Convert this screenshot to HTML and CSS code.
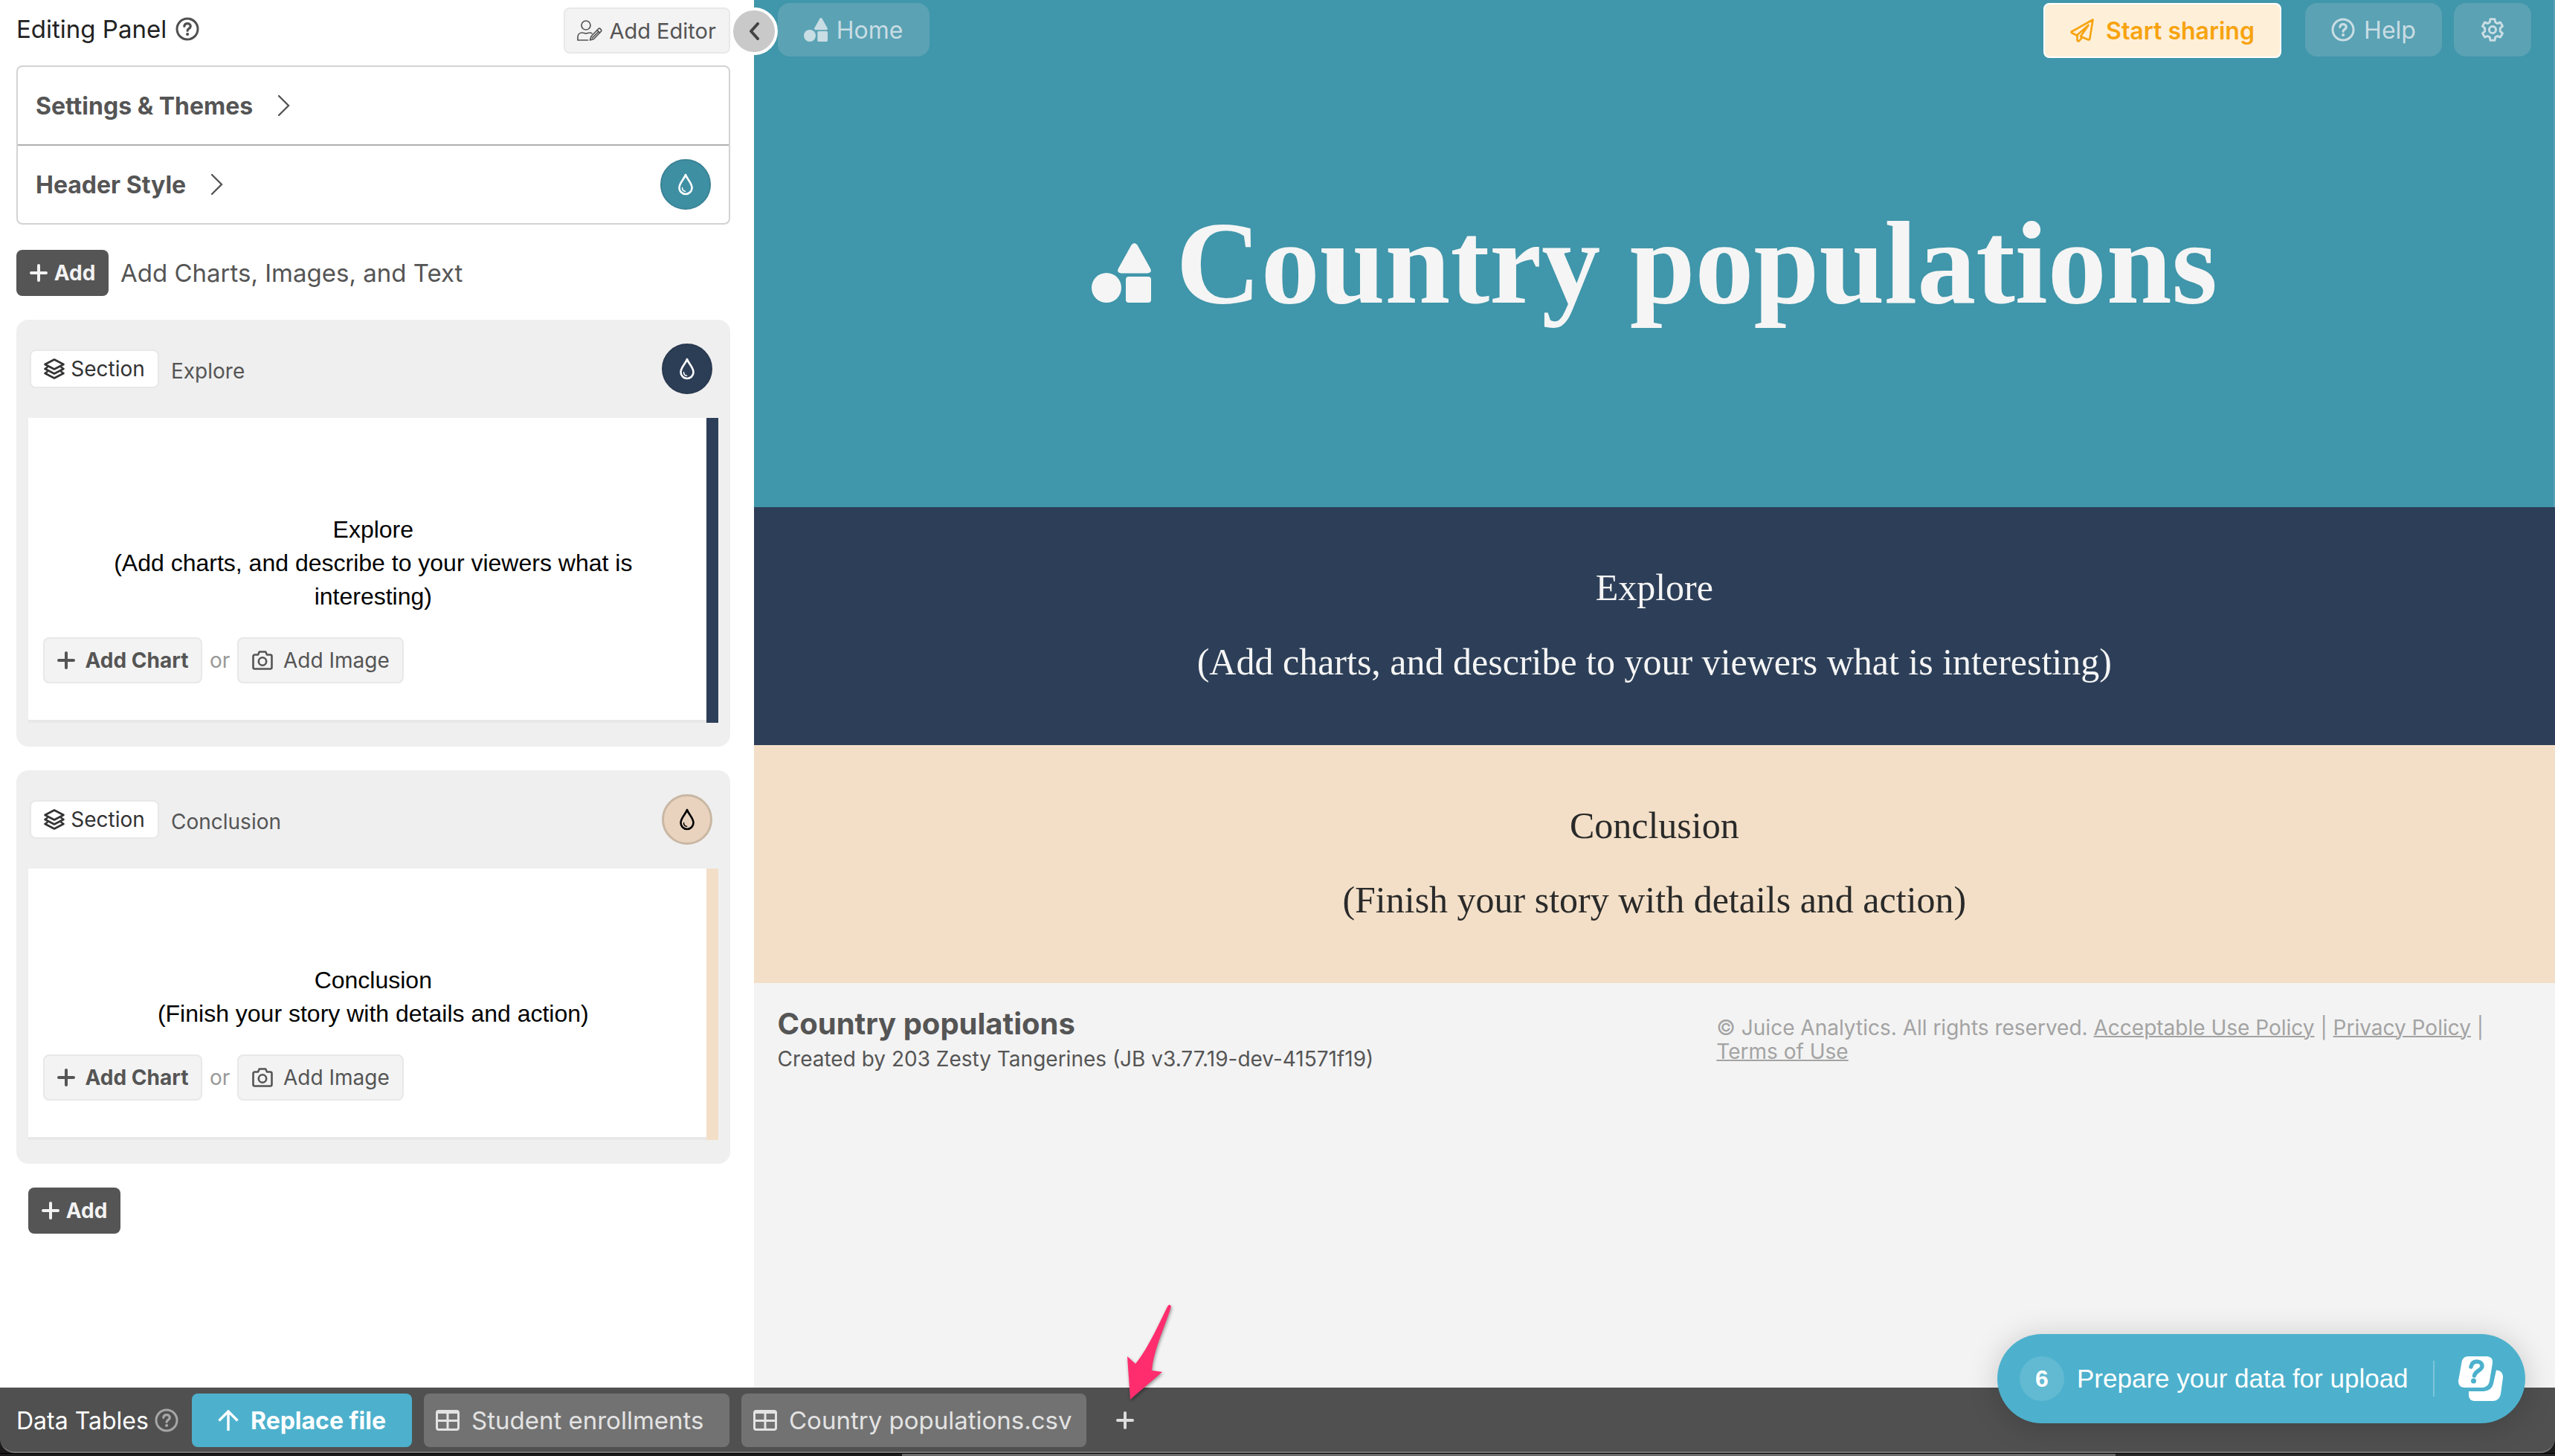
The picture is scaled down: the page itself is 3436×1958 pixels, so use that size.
FILE: index.html
```html
<!DOCTYPE html>
<html lang="en">
<head>
<meta charset="utf-8">
<title>Country populations</title>
<link rel="stylesheet" href="styles.css">
</head>
<body>
<svg class="sprite" aria-hidden="true">
  <symbol id="i-help" viewBox="0 0 32 32"><g fill="none" stroke="currentColor" stroke-linecap="round"><circle cx="16" cy="16" r="14" stroke-width="3"/><path d="M11.8 12.4c.3-2.600 2-3.700 4.300-3.700 2.500 0 4.200 1.500 4.200 3.600 0 3.100-4.200 3-4.200 6" stroke-width="3.200"/></g><circle cx="16.100" cy="23" r="2.100" fill="currentColor"/></symbol>
  <symbol id="i-plus" viewBox="0 0 24 24"><path d="M12 2v20M2 12h20" fill="none" stroke="currentColor" stroke-width="4" stroke-linecap="round"/></symbol>
  <symbol id="i-chevron" viewBox="0 0 16 28"><path d="M1 1l13 13L1 27" fill="none" stroke="currentColor" stroke-width="2.400" stroke-linecap="round"/></symbol>
  <symbol id="i-drop" viewBox="0 0 22 30"><path d="M11 2C9 8 2.500 13 2.500 19.500a8.500 8.500 0 0 0 17 0C19.500 13 13 8 11 2z" fill="none" stroke="currentColor" stroke-width="2.600" stroke-linejoin="round"/><path d="M6.500 19.500c0 2.800 1.700 4.500 4 4.800" fill="none" stroke="currentColor" stroke-width="1.500" stroke-linecap="round"/></symbol>
  <symbol id="i-layers" viewBox="0 0 28 28"><g fill="none" stroke="currentColor" stroke-width="2.600" stroke-linejoin="round" stroke-linecap="round"><path d="M14 1.500L26.500 8 14 14.500 1.500 8z"/><path d="M4.500 12L1.500 14 14 20.500 26.500 14l-3-2"/><path d="M4.500 18l-3 2L14 26.500 26.500 20l-3-2"/></g></symbol>
  <symbol id="i-camera" viewBox="0 0 28 26"><g fill="none" stroke="currentColor" stroke-width="2.600" stroke-linejoin="round"><path d="M3.500 5.500h4.500l1.800-4h8.400l1.800 4h4.500a2 2 0 0 1 2 2v15a2 2 0 0 1-2 2h-21a2 2 0 0 1-2-2v-15a2 2 0 0 1 2-2z"/><circle cx="14" cy="14.500" r="5.200"/></g></symbol>
  <symbol id="i-table" viewBox="0 0 32 28"><path fill-rule="evenodd" d="M4 0h24a4 4 0 0 1 4 4v20a4 4 0 0 1-4 4H4a4 4 0 0 1-4-4V4a4 4 0 0 1 4-4zM3 5v8h11.500V5zM17.500 5v8H29V5zM3 16v8a1 1 0 0 0 1 1h10.500v-9zM17.500 16v9H28a1 1 0 0 0 1-1v-8z" fill="currentColor"/></symbol>
  <symbol id="i-shapes" viewBox="0 0 80 80"><g fill="currentColor"><circle cx="20" cy="60" r="20"/><path d="M53.500 2.500q4-5 8 0L79 34q3 6-4 6.500H40q-7-.5-4-6.500z"/><rect x="46" y="45" width="34" height="35" rx="4"/></g></symbol>
  <symbol id="i-editor" viewBox="0 0 34 28"><g fill="none" stroke="currentColor" stroke-width="1.700" stroke-linejoin="round" stroke-linecap="round"><circle cx="12" cy="7" r="6"/><path d="M14.500 27H1v-4c0-3 2-6 6-6 2 0 3 1 5 1s3-1 5-1c1.500 0 2.400.3 3 .8"/><path d="M17.500 27l1.500-5 10-10.500c1.500-1 4.500 1.500 3.500 3.500L22.500 25.500z"/><path d="M27 13.700l3.500 3.500M20.500 24l7.500-7.500"/></g></symbol>
  <symbol id="i-plane" viewBox="0 0 32 32"><g fill="none" stroke="currentColor" stroke-width="2.600" stroke-linejoin="round" stroke-linecap="round"><path d="M30.500 1.500L2 17.500q-1 1 .5 2l6.500 3L24.500 9 14 24l10.500 4.500q1.500.3 1.800-1z"/><path d="M9.500 22.500V29q1 2.500 3 .5L16 25.500"/></g></symbol>
  <symbol id="i-gear" viewBox="0 0 32 32"><g fill="none" stroke="currentColor" stroke-width="3" stroke-linejoin="round"><path d="M13 1.800h6l.8 4.200 2.700 1.500 4-1.500 3 5.200-3.200 2.800v4l3.200 2.800-3 5.200-4-1.500-2.700 1.500-.8 4.200h-6l-.8-4.200-2.700-1.500-4 1.500-3-5.200L5.700 18v-4l-3.200-2.800 3-5.200 4 1.500L12.200 6z"/><circle cx="16" cy="16" r="4.600"/></g></symbol>
  <symbol id="i-up" viewBox="0 0 28 28"><path d="M14 28V2M1.500 14.500L14 2l12.500 12.500" fill="none" stroke="currentColor" stroke-width="3.400"/></symbol>
  <symbol id="i-back" viewBox="0 0 14 24"><path d="M12 2L3 12l9 10" fill="none" stroke="currentColor" stroke-width="4" stroke-linecap="round" stroke-linejoin="round"/></symbol>
</svg>

<div class="app">
  <div class="workspace">
    <aside class="panel">
      <div class="panel-head">
        <h2 class="panel-title">Editing Panel <svg class="ic-help"><use href="#i-help"/></svg></h2>
        <button class="btn btn-editor"><svg class="ic-editor"><use href="#i-editor"/></svg>Add Editor</button>
      </div>

      <div class="accordion">
        <div class="acc-row"><button class="acc-btn">Settings &amp; Themes <svg class="ic-chevron"><use href="#i-chevron"/></svg></button></div>
        <div class="acc-row"><button class="acc-btn">Header Style <svg class="ic-chevron"><use href="#i-chevron"/></svg></button>
          <button class="swatch teal" aria-label="Header colour"><svg class="ic-drop"><use href="#i-drop"/></svg></button></div>
      </div>

      <div class="add-row">
        <button class="btn-add"><svg class="ic-plus"><use href="#i-plus"/></svg>Add</button>
        <span>Add Charts, Images, and Text</span>
      </div>

      <section class="card navy-card">
        <div class="card-head">
          <button class="badge"><svg class="ic-layers"><use href="#i-layers"/></svg>Section</button>
          <span class="card-name">Explore</span>
          <button class="swatch navy" aria-label="Section colour"><svg class="ic-drop"><use href="#i-drop"/></svg></button>
        </div>
        <div class="card-body">
          <p class="card-text">Explore<br>(Add charts, and describe to your viewers what is interesting)</p>
          <div class="card-actions">
            <button class="btn btn-chart"><svg class="ic-plus"><use href="#i-plus"/></svg>Add Chart</button>
            <span class="or">or</span>
            <button class="btn btn-image"><svg class="ic-camera"><use href="#i-camera"/></svg>Add Image</button>
          </div>
        </div>
      </section>

      <section class="card sand-card">
        <div class="card-head">
          <button class="badge"><svg class="ic-layers"><use href="#i-layers"/></svg>Section</button>
          <span class="card-name">Conclusion</span>
          <button class="swatch sand" aria-label="Section colour"><svg class="ic-drop"><use href="#i-drop"/></svg></button>
        </div>
        <div class="card-body">
          <p class="card-text">Conclusion<br>(Finish your story with details and action)</p>
          <div class="card-actions">
            <button class="btn btn-chart"><svg class="ic-plus"><use href="#i-plus"/></svg>Add Chart</button>
            <span class="or">or</span>
            <button class="btn btn-image"><svg class="ic-camera"><use href="#i-camera"/></svg>Add Image</button>
          </div>
        </div>
      </section>

      <div class="add-last"><button class="btn-add"><svg class="ic-plus"><use href="#i-plus"/></svg>Add</button></div>
      <button class="collapse" aria-label="Collapse panel"><svg class="ic-back"><use href="#i-back"/></svg></button>
    </aside>

    <main class="story">
      <header class="hero">
        <nav class="topnav">
          <button class="nav-btn"><svg class="ic-nav"><use href="#i-shapes"/></svg>Home</button>
          <button class="share"><svg class="ic-nav"><use href="#i-plane"/></svg>Start sharing</button>
          <button class="nav-btn nav-help"><svg class="ic-nav"><use href="#i-help"/></svg>Help</button>
          <button class="nav-btn nav-gear" aria-label="Settings"><svg class="ic-nav"><use href="#i-gear"/></svg></button>
        </nav>
        <h1 class="title"><svg class="ic-logo"><use href="#i-shapes"/></svg>Country populations</h1>
      </header>
      <section class="band band-navy"><p>Explore</p><p>(Add charts, and describe to your viewers what is interesting)</p></section>
      <section class="band band-sand"><p>Conclusion</p><p>(Finish your story with details and action)</p></section>
      <footer class="foot">
        <div class="foot-left"><h3>Country populations</h3><p>Created by 203 Zesty Tangerines (JB v3.77.19-dev-41571f19)</p></div>
        <p class="legal">© Juice Analytics. All rights reserved. <a href="#">Acceptable Use Policy</a> | <a href="#">Privacy Policy</a> | <a href="#">Terms of Use</a></p>
      </footer>
    </main>
  </div>

  <div class="tables">
    <span class="tables-label">Data Tables<svg class="ic-help"><use href="#i-help"/></svg></span>
    <button class="tab tab-replace"><svg class="ic-up"><use href="#i-up"/></svg>Replace file</button>
    <button class="tab tab-student"><svg class="ic-table"><use href="#i-table"/></svg>Student enrollments</button>
    <button class="tab tab-country"><svg class="ic-table"><use href="#i-table"/></svg>Country populations.csv</button>
    <button class="tab-new" aria-label="Add table"><svg class="ic-plus"><use href="#i-plus"/></svg></button>
    <svg class="pointer" viewBox="0 0 60 136"><path d="M4 134L0 76l11 10C26 68 40 38 54 9q3-5 5 0C50 38 35 68 33 95l14 2z" transform="translate(1 -6)"/></svg>
  </div>
</div>
<div class="desktop"></div>

<button class="guide">
  <span class="guide-num">6</span>
  <span class="guide-text">Prepare your data for upload</span>
  <svg class="guide-icon" viewBox="0 0 60 60"><path d="M51 18.500q9.500 1 9 10l-3 22q-1.500 9-10 9.500H21q-7-1-7-8v-5h20q11-1 13-10z" fill="#fff"/><path d="M13 0h26q8 1 7 9l-4 24q-1.500 8-9 9H8q-8-.500-8-9L4.500 8Q6 0 13 0z" fill="#fff"/><path d="M17 14c1-5 4-7 8-7 5 0 7 3 7 6 0 6-9 6-10.500 13" fill="none" stroke="#4db1cd" stroke-width="5.500" stroke-linecap="round"/><circle cx="20.500" cy="33" r="3.500" fill="#4db1cd"/></svg>
</button>
</body>
</html>
```
FILE: styles.css
```css
* { box-sizing: border-box; }
html { height: 100%; }
body {
  margin: 0;
  min-height: 100%;
  display: flex;
  flex-direction: column;
  background: #1c1a1b;
  color: #555;
  font-family: Inter, "Liberation Sans", sans-serif;
  font-size: 28px;
  position: relative;
}
h1, h2, h3, p { margin: 0; font-weight: 400; }
button {
  font: inherit;
  color: inherit;
  border: 0;
  padding: 0;
  margin: 0;
  background: none;
  display: flex;
  align-items: center;
  justify-content: center;
  white-space: nowrap;
  cursor: pointer;
}
svg { display: block; flex: none; }
.sprite { position: absolute; width: 0; height: 0; }

.app {
  flex: 1;
  display: flex;
  flex-direction: column;
  background: #505050;
  border-bottom: 2px solid #777;
  border-radius: 0 0 20px 20px;
}
.desktop {
  height: 4px;
  border-top: 1px solid #000;
  background: linear-gradient(90deg, #1c1a1b 0 35.3%, #6b696a 35.3% 82.8%, #29282a 82.8%);
}
.workspace {
  flex: 1;
  display: grid;
  grid-template-columns: 59fr 141fr;
}

/* Editing panel */
.panel {
  position: relative;
  min-width: 0;
  padding: 10px 32px 30px 22px;
  background: #fff;
}
.panel-head {
  display: flex;
  justify-content: space-between;
  align-items: center;
  margin-bottom: 16px;
}
.panel-title {
  display: flex;
  align-items: center;
  gap: 12px;
  padding-bottom: 4px;
  font-size: 33px;
  color: #222;
}
.ic-help { width: 32px; height: 32px; color: #505050; }
.btn {
  height: 62px;
  border: 2px solid #e8e8e8;
  border-radius: 8px;
  background: #f3f3f3;
  font-size: 28px;
}
.btn-editor { width: 224px; gap: 9px; font-size: 29px; }
.ic-editor { width: 34px; height: 28px; }

.accordion {
  border: 2px solid #d3d3d3;
  border-radius: 8px;
}
.acc-row {
  height: 104px;
  padding: 0 24px;
  display: flex;
  align-items: center;
  justify-content: space-between;
}
.acc-row + .acc-row { height: 106px; border-top: 2px solid #b0b0b0; }
.acc-btn { gap: 34px; font-size: 32px; font-weight: 700; }
.ic-chevron { width: 16px; height: 28px; }
.swatch {
  width: 68px;
  height: 68px;
  border-radius: 50%;
  color: #fff;
}
.teal { background: #3f8fa3; border: 2px solid #3a8396; }
.navy { background: #2c3e56; border: 2px solid #293950; }
.sand { background: #e9d3be; border: 3px solid #c9b7a4; color: #000; }
.ic-drop { width: 22px; height: 30px; }

.add-row {
  display: flex;
  align-items: center;
  gap: 16px;
  margin: 34px 0 32px;
  font-size: 33px;
}
.btn-add {
  width: 124px;
  height: 62px;
  gap: 9px;
  border-radius: 8px;
  background: #555;
  color: #f3f3f3;
  font-size: 28px;
  font-weight: 700;
}
.ic-plus { width: 24px; height: 24px; }
.add-last { padding-left: 16px; }

.card {
  margin-bottom: 32px;
  padding: 32px 16px;
  border-radius: 16px;
  background: #efefef;
}
.card-head {
  display: flex;
  align-items: center;
  padding: 0 8px 32px 2px;
}
.badge {
  width: 174px;
  height: 52px;
  gap: 8px;
  border: 2px solid #e8e8e8;
  border-radius: 8px;
  background: #fff;
  color: #333;
  font-size: 28px;
}
.ic-layers { width: 28px; height: 28px; }
.card-name { flex: 1; padding: 6px 0 0 16px; font-size: 28px; }
.card-body {
  padding: 128px 4px 53px 20px;
  border-right: 16px solid;
  box-shadow: inset 0 -4px #e8e8e8;
  background: #fff;
}
.navy-card .card-body { border-color: #2d3f58; }
.sand-card .card-body { border-color: #f3dfc7; }
.card-text {
  padding: 0 60px;
  font-family: "Liberation Sans", Arial, sans-serif;
  font-size: 32px;
  line-height: 45px;
  text-align: center;
  color: #000;
}
.card-actions {
  display: flex;
  align-items: center;
  gap: 10px;
  margin-top: 32px;
}
.btn-chart { width: 214px; gap: 14px; font-weight: 700; }
.btn-image { width: 224px; gap: 14px; }
.ic-camera { width: 28px; height: 26px; }
.or { color: #999; }

.collapse {
  position: absolute;
  z-index: 2;
  top: 10px;
  right: -32px;
  width: 64px;
  height: 64px;
  border: 4px solid #fff;
  border-radius: 50%;
  background: #c9c9c9;
  color: #444;
}
.ic-back { width: 14px; height: 24px; }

/* Story preview */
.story { min-width: 0; background: #f3f3f3; }
.hero {
  height: 682px;
  padding: 4px 32px 0;
  background: #4096aa;
  box-shadow: inset -2px 0 #5aa2b4;
}
.topnav { display: flex; align-items: flex-start; }
.nav-btn {
  width: 204px;
  height: 72px;
  gap: 12px;
  border-radius: 16px;
  background: #5aa2b4;
  color: #c9dde4;
  font-size: 32px;
}
.nav-help { width: 184px; margin: 0 16px 0 32px; }
.nav-gear { width: 104px; }
.ic-nav { width: 32px; height: 32px; }
.share {
  width: 320px;
  height: 74px;
  margin-left: auto;
  gap: 16px;
  border: 2px solid #fff;
  border-radius: 8px;
  background: #feefd9;
  color: #f7a30e;
  font-size: 32px;
  font-weight: 600;
}
.title {
  display: flex;
  align-items: baseline;
  justify-content: center;
  gap: 34px;
  margin-top: 186px;
  font-family: "Liberation Serif", serif;
  font-size: 158px;
  line-height: 180px;
  font-weight: 700;
  color: #f5f5f5;
}
.ic-logo { width: 80px; height: 80px; }
.band {
  height: 320px;
  padding-top: 58px;
  font-family: "Liberation Serif", serif;
  font-size: 50px;
  line-height: 100px;
  text-align: center;
}
.band-navy { background: #2d3f58; color: #f5f5f5; }
.band-sand { background: #f3dfc7; color: #2a2a2a; }
.foot {
  display: flex;
  justify-content: space-between;
  padding: 32px 52px 0 32px;
}
.foot-left h3 { font-size: 40px; line-height: 46px; font-weight: 700; }
.foot-left p { font-size: 28px; line-height: 48px; }
.legal {
  width: 46%;
  padding-top: 12px;
  color: #a3a3a3;
  font-size: 28px;
  line-height: 32px;
}
.legal a { color: inherit; text-decoration-thickness: 2px; }

/* Data tables bar */
.tables {
  position: relative;
  height: 86px;
  padding: 8px 22px 6px;
  display: flex;
  align-items: center;
  gap: 16px;
  font-size: 33px;
}
.tables-label { width: 220px; display: flex; align-items: center; gap: 8px; color: #fff; font-size: 32px; white-space: nowrap; }
.tables .ic-help { color: #a6a6a6; }
.tab {
  height: 72px;
  padding-left: 16px;
  border-radius: 8px;
  background: #727272;
  color: #e3e3e3;
  gap: 16px;
  justify-content: flex-start;
}
.tab-replace { width: 296px; padding: 0; justify-content: center; background: #4db1cd; color: #fff; font-weight: 700; font-size: 32px; }
.tab-student { width: 411px; }
.tab-country { width: 464px; }
.ic-up { width: 28px; height: 28px; }
.ic-table { width: 32px; height: 28px; }
.tab-new { width: 72px; height: 72px; color: #dcdcdc; }
.pointer {
  position: absolute;
  left: 1515px;
  bottom: 62px;
  width: 60px;
  height: 136px;
  fill: #ff2d6d;
  filter: drop-shadow(1px 2px 2px #0006);
}

/* Guide launcher */
.guide {
  position: absolute;
  right: 40px;
  bottom: 44px;
  width: 710px;
  height: 120px;
  padding: 0 30px;
  border-radius: 60px;
  background: #4db1cd;
  color: #fff;
  justify-content: space-between;
  font-family: "Liberation Sans", Arial, sans-serif;
  font-size: 35px;
  box-shadow: 0 4px 40px #0000002e;
}
.guide-num {
  width: 60px;
  height: 60px;
  border-radius: 50%;
  background: #62b9d2;
  line-height: 60px;
  font-size: 32px;
  font-weight: 700;
}
.guide-text { flex: 1; margin: 0 32px 0 17px; border-right: 2px solid #7cc5da; line-height: 48px; text-align: left; }
.guide-icon { width: 60px; height: 60px; }
```
